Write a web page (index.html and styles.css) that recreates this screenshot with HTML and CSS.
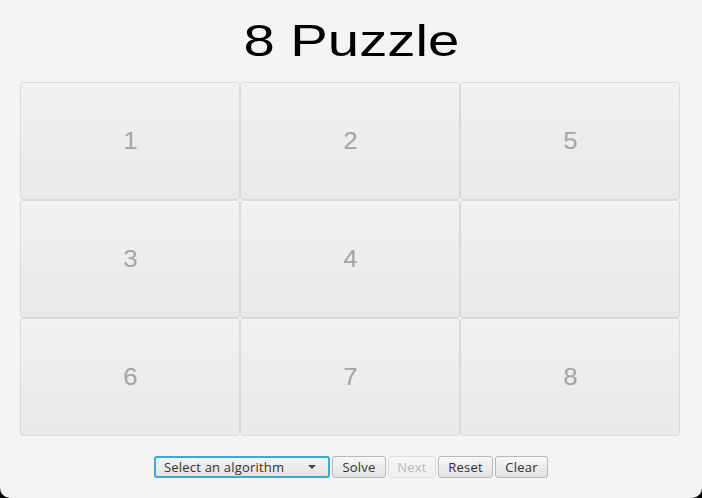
FILE: index.html
```
<!DOCTYPE html>
<html>
<head>
<meta charset="utf-8">
<link rel="stylesheet" href="styles.css">
</head>
<body>
<div class="window">
  <h1 class="title">8 Puzzle</h1>
  <div class="board">
    <div class="tile"><span class="num">1</span></div>
    <div class="tile"><span class="num">2</span></div>
    <div class="tile"><span class="num">5</span></div>
    <div class="tile"><span class="num">3</span></div>
    <div class="tile"><span class="num">4</span></div>
    <div class="tile"></div>
    <div class="tile"><span class="num">6</span></div>
    <div class="tile"><span class="num">7</span></div>
    <div class="tile"><span class="num">8</span></div>
  </div>
  <div class="controls">
    <div class="combo"><span class="combo-label">Select an algorithm</span><span class="arrow"></span></div>
    <button class="btn btn-solve">Solve</button>
    <button class="btn btn-next" disabled>Next</button>
    <button class="btn btn-reset">Reset</button>
    <button class="btn btn-clear">Clear</button>
  </div>
</div>
</body>
</html>
```
FILE: styles.css
```
html, body {
  margin: 0;
  padding: 0;
  background: #000;
  width: 702px;
  height: 498px;
  overflow: hidden;
}
.window {
  width: 702px;
  height: 498px;
  background: #f4f4f4;
  border-radius: 0 0 10px 10px;
  display: flex;
  flex-direction: column;
  align-items: center;
  font-family: "Liberation Sans", Arial, sans-serif;
}
.title {
  margin: 0;
  height: 82px;
  display: flex;
  align-items: center;
  justify-content: center;
  font-size: 45px;
  font-weight: normal;
  color: #000;
  transform: scaleX(1.25);
}
.board {
  width: 660px;
  margin-right: 2px;
  display: grid;
  grid-template-columns: repeat(3, 220px);
  grid-template-rows: repeat(3, 118px);
}
.tile {
  box-sizing: border-box;
  border: 1px solid #d9d9d9;
  border-radius: 3px;
  background: linear-gradient(#f1f1f1, #e9e9e9);
  box-shadow: inset 0 1px 0 #f8f8f8;
  display: flex;
  align-items: center;
  justify-content: center;
  font-size: 23px;
  color: #a4a4a4;
}
.num {
  display: inline-block;
  transform: scaleX(1.12);
}
.controls {
  margin-top: 20px;
  display: flex;
  gap: 2px;
  height: 22px;
  font-family: "Open Sans", "Liberation Sans", sans-serif;
}
.combo {
  box-sizing: border-box;
  width: 176px;
  height: 22px;
  border: 2px solid #3fa9d3;
  border-radius: 3px;
  background: linear-gradient(#f4f4f4, #e2e2e2);
  display: flex;
  align-items: center;
  padding: 0 8px 0 8px;
  font-size: 13px;
  letter-spacing: 0.2px;
  color: #333;
}
.combo-label {
  flex: 1;
}
.arrow {
  width: 0;
  height: 0;
  border-left: 4px solid transparent;
  border-right: 4px solid transparent;
  border-top: 4px solid #444;
  margin-right: 4px;
}
.btn {
  box-sizing: border-box;
  height: 22px;
  padding: 0;
  border: 1px solid #b9b9b9;
  border-radius: 3px;
  background: linear-gradient(#f7f7f7, #e1e1e1);
  font-family: "Open Sans", "Liberation Sans", sans-serif;
  font-size: 13px;
  letter-spacing: 0.2px;
  color: #333;
}
.btn-solve { width: 54px; }
.btn-next { width: 48px; }
.btn-reset { width: 55px; }
.btn-clear { width: 53px; }
.btn:disabled {
  color: #bbb;
  border-color: #dedede;
  background: linear-gradient(#f6f6f6, #efefef);
}
```
